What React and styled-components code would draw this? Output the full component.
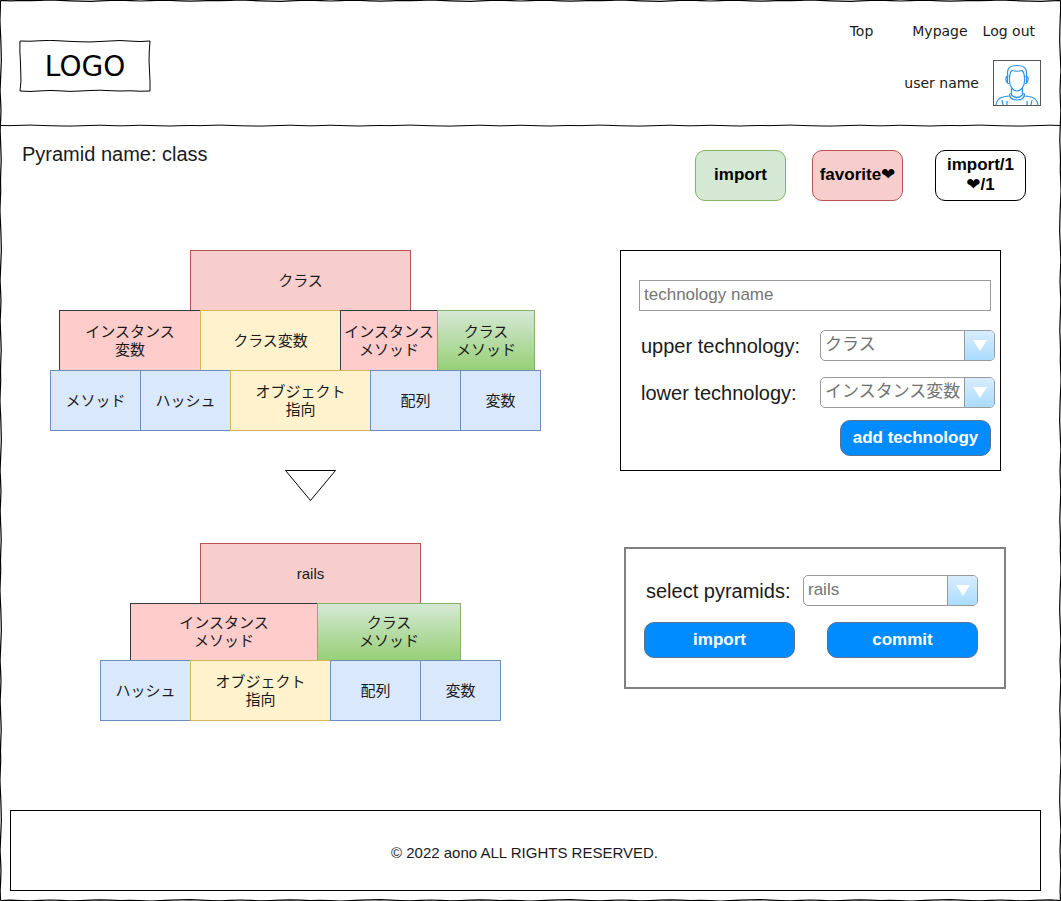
import React from "react";
import styled, { createGlobalStyle } from "styled-components";

const sans = `"Liberation Sans", "Noto Sans CJK JP", sans-serif`;
const wide = `"DejaVu Sans", "Noto Sans CJK JP", sans-serif`;

const GlobalStyle = createGlobalStyle`
  *, *::before, *::after { box-sizing: border-box; }
  body { margin: 0; background: #fff; color: #000; font-family: ${sans}; }
`;

/* Hand-drawn strokes: a straight run with a small wobble every 10 units. */
const wobble = [0, 0.6, 1, 0.4, 0, 0.3, -0.3, -0.8, -0.2, 0.5, 0.9, 1.2, 0.6, 0, -0.6, 0.1, 0.7, 0.2, -0.5];

function run(length, seed, amp, place) {
  const points = [];
  for (let t = 0; t <= length; t += 10) {
    const d = t === 0 || t >= length - 5 ? 0 : wobble[(t / 10 + seed) % wobble.length] * amp;
    points.push(place(t, d));
  }
  points.push(place(length, 0));
  return "M" + points.join("L");
}

function sketchBox(w, h, seed, amp, inset) {
  const r = w - inset;
  const b = h - inset;
  return [
    run(r - inset, seed, amp, (t, d) => `${inset + t} ${inset + d}`),
    run(b - inset, seed + 5, amp, (t, d) => `${r - d} ${inset + t}`),
    run(r - inset, seed + 9, amp, (t, d) => `${inset + t} ${b - d}`),
    run(b - inset, seed + 3, amp, (t, d) => `${inset + d} ${inset + t}`),
  ].join("");
}

const SketchOverlay = styled.svg`
  position: absolute;
  inset: 0;
  width: 100%;
  height: 100%;
  pointer-events: none;
  fill: none;
  stroke: #000;
  path { vector-effect: non-scaling-stroke; }
`;

const SketchRule = styled.svg`
  display: block;
  width: 100%;
  height: 4px;
  fill: none;
  stroke: #000;
  path { vector-effect: non-scaling-stroke; }
`;

const Page = styled.div`
  position: relative;
  display: flex;
  flex-direction: column;
  min-height: 100vh;
`;

const Header = styled.header`
  display: flex;
  justify-content: space-between;
  align-items: flex-start;
  padding: 22px 20px 17px 19px;
`;

const Logo = styled.a`
  position: relative;
  display: grid;
  place-items: center;
  width: 132px;
  height: 52px;
  margin-top: 18px;
  padding-top: 2px;
  color: #000;
  font: 28px/32px ${wide};
  text-decoration: none;
`;

const HeaderSide = styled.div`
  display: flex;
  flex-direction: column;
  align-items: flex-end;
  gap: 20px;
`;

const Nav = styled.nav`
  display: flex;
  gap: 15px;
  padding-right: 6px;
`;

const NavLink = styled.a`
  color: #1a1a1a;
  font: 14px/18px ${wide};
  text-decoration: none;
  &:first-child { margin-right: 24px; }
`;

const User = styled.div`
  display: flex;
  align-items: center;
  gap: 14px;
  color: #1a1a1a;
  font: 14px/18px ${wide};
`;

const Avatar = styled.svg`
  width: 48px;
  height: 46px;
  border: 1px solid #555;
  fill: none;
  stroke: #2b93ee;
  stroke-width: 1.2;
`;

const TitleBar = styled.section`
  display: flex;
  flex-wrap: wrap;
  justify-content: space-between;
  align-items: flex-start;
  padding: 15px 35px 0 22px;
`;

const Title = styled.h1`
  margin: 0;
  color: #1a1a1a;
  font: 20px/24px ${sans};
`;

const Actions = styled.div`
  display: flex;
  gap: 26px;
  padding-top: 8px;
`;

const tones = {
  green: ["#d5e8d4", "#82b366"],
  pink: ["#f8cecc", "#b85450"],
  white: ["#fff", "#000"],
  rose: ["#fcc", "#36393d"],
  yellow: ["#fff2cc", "#d6b656"],
  blue: ["#dae8fc", "#6c8ebf"],
  leaf: ["linear-gradient(#d5e8d4, #97d077)", "#82b366"],
};

const tone = ({ $tone }) => `
  background: ${tones[$tone][0]};
  border: 1px solid ${tones[$tone][1]};
`;

const Badge = styled.button`
  ${tone}
  width: 91px;
  height: 51px;
  padding: 0 0 2px;
  border-radius: 10px;
  color: #000;
  font: bold 17px/20px "Liberation Sans", "DejaVu Sans", sans-serif;
  white-space: nowrap;
`;

const Counter = styled(Badge).attrs({ as: "output" })`
  display: grid;
  place-content: center;
  margin-left: 6px;
  text-align: center;
`;

const Main = styled.main`
  display: grid;
  grid-template-columns: minmax(541px, 620fr) minmax(386px, 441fr);
  flex: 1;
  align-items: start;
  padding: 49px 0 80px;
`;

const Pyramids = styled.section`
  display: flex;
  flex-direction: column;
  align-items: flex-start;
  padding-left: 50px;
`;

const Pyramid = styled.div`
  margin-left: ${(p) => p.$indent}px;
`;

const Row = styled.div`
  display: grid;
  grid-template-columns: ${(p) => p.$columns.map((c) => `${c}px`).join(" ")};
  height: ${(p) => p.$height || 60}px;
  margin-left: ${(p) => p.$indent}px;
`;

const Block = styled.div`
  ${tone}
  display: grid;
  place-content: center;
  margin: 0 -1px -1px 0;
  color: #1a1a1a;
  font-size: 15px;
  line-height: 18px;
  text-align: center;
  white-space: pre;
`;

const Arrow = styled.svg`
  width: 52px;
  height: 32px;
  margin: 40px 0 41px 235px;
  fill: #fff;
  stroke: #000;
`;

const Panels = styled.section`
  display: flex;
  flex-direction: column;
  align-items: flex-start;
  gap: 76px;
`;

const AddPanel = styled.form`
  display: flex;
  flex-direction: column;
  width: 381px;
  padding: 29px 5px 14px 18px;
  border: 1px solid #000;
`;

const SelectPanel = styled.form`
  display: flex;
  flex-direction: column;
  gap: 16px;
  width: 382px;
  margin-left: 4px;
  padding: 26px 26px 29px 18px;
  border: 2px solid #808080;
`;

const TextInput = styled.input`
  height: 31px;
  margin: 0 4px 19px 0;
  padding: 0 4px 2px;
  border: 1px solid #999;
  border-radius: 0;
  color: #666;
  font: 17px/20px ${sans};
  &::placeholder { color: #757575; opacity: 1; }
`;

const Field = styled.div`
  display: flex;
  align-items: center;
  justify-content: space-between;
  padding-left: 2px;
  ${AddPanel} & + & { margin-top: 16px; }
`;

const Label = styled.label`
  color: #1a1a1a;
  font-size: 20px;
  line-height: 24px;
`;

const SelectBox = styled.div`
  display: flex;
  position: relative;
  width: 175px;
  height: 31px;
  border: 1px solid #999;
  border-radius: 5px;
  overflow: hidden;
`;

const Select = styled.select`
  flex: 1;
  appearance: none;
  padding: 0 30px 1px 4px;
  border: 0;
  background: transparent;
  color: #737373;
  font: 17px/24px ${sans};
`;

const DropMark = styled.span`
  position: absolute;
  inset: 0 0 0 auto;
  display: grid;
  place-items: center;
  width: 30px;
  border-left: 1px solid #999;
  background: linear-gradient(#d8edff, #aadcff);
  pointer-events: none;
  &::after {
    content: "";
    border: 7px solid transparent;
    border-top: 11px solid #fff;
    border-bottom: 0;
  }
`;

const Buttons = styled.div`
  display: flex;
  justify-content: space-between;
`;

const PrimaryButton = styled.button`
  width: 151px;
  height: 36px;
  padding: 0;
  border: 1px solid #5a7390;
  border-radius: 10px;
  background: #008cff;
  color: #fff;
  font: bold 17px/20px ${sans};
  ${AddPanel} & { align-self: flex-end; margin: 12px 4px 0 0; }
`;

const Footer = styled.footer`
  display: grid;
  place-items: center;
  height: 81px;
  margin: 0 20px 10px 10px;
  padding: 4px 2px 0 0;
  border: 1px solid #000;
  color: #1a1a1a;
  font-size: 15px;
  line-height: 18px;
`;

const PYRAMIDS = [
  {
    indent: 0,
    rows: [
      { indent: 140, columns: [220], blocks: [["pink", "クラス"]] },
      {
        indent: 9,
        columns: [141, 140, 97, 97],
        blocks: [
          ["rose", "インスタンス\n変数"],
          ["yellow", "クラス変数"],
          ["rose", "インスタンス\nメソッド"],
          ["leaf", "クラス\nメソッド"],
        ],
      },
      {
        indent: 0,
        columns: [90, 90, 140, 90, 80],
        blocks: [
          ["blue", "メソッド"],
          ["blue", "ハッシュ"],
          ["yellow", "オブジェクト\n指向"],
          ["blue", "配列"],
          ["blue", "変数"],
        ],
      },
    ],
  },
  {
    indent: 50,
    rows: [
      { indent: 100, columns: [220], blocks: [["pink", "rails"]] },
      {
        indent: 30,
        height: 57,
        columns: [187, 143],
        blocks: [["rose", "インスタンス\nメソッド"], ["leaf", "クラス\nメソッド"]],
      },
      {
        indent: 0,
        columns: [90, 140, 90, 80],
        blocks: [
          ["blue", "ハッシュ"],
          ["yellow", "オブジェクト\n指向"],
          ["blue", "配列"],
          ["blue", "変数"],
        ],
      },
    ],
  },
];

function PyramidView({ data }) {
  return (
    <Pyramid $indent={data.indent}>
      {data.rows.map((row, i) => (
        <Row key={i} $indent={row.indent} $columns={row.columns} $height={row.height}>
          {row.blocks.map(([t, text], j) => (
            <Block key={j} $tone={t}>{text}</Block>
          ))}
        </Row>
      ))}
    </Pyramid>
  );
}

function SelectField({ id, label, options }) {
  return (
    <Field>
      <Label htmlFor={id}>{label}</Label>
      <SelectBox>
        <Select id={id}>
          {options.map((o) => <option key={o}>{o}</option>)}
        </Select>
        <DropMark />
      </SelectBox>
    </Field>
  );
}

export default function App() {
  const stay = (e) => e.preventDefault();
  return (
    <>
      <GlobalStyle />
      <Page>
        <Header>
          <Logo href="#">
            <SketchOverlay viewBox="0 0 132 52" preserveAspectRatio="none" aria-hidden="true">
              <path d={sketchBox(132, 52, 4, 0.8, 1)} strokeWidth="1" />
            </SketchOverlay>
            LOGO
          </Logo>
          <HeaderSide>
            <Nav>
              <NavLink href="#">Top</NavLink>
              <NavLink href="#">Mypage</NavLink>
              <NavLink href="#">Log out</NavLink>
            </Nav>
            <User>
              user name
              <Avatar viewBox="0 0 46 44" role="img" aria-label="user">
                <path d="M14 16C12 7 16 4.500 23 4.500S34 7 32 16" />
                <path d="M15.500 18C15.500 13 16 11 18 9.500Q23 11 28 9.500C30 11 30.500 13 30.500 18V20C30.500 26 26.500 30 23 30S15.500 26 15.500 20Z" />
                <path d="M14 15.500Q11.500 15 12 19Q12.500 22.500 15 22.500M32 15.500Q34.500 15 34 19Q33.500 22.500 31 22.500M13.500 16V22M32.500 16V22" />
                <path d="M17.500 27V34Q23 39 28.500 34V27M15.500 33Q15.500 39 23 39T30.500 33L28.500 32.500M15.500 33L17.500 32.500" />
                <path d="M2 44C3 37 8 35.500 16 35M44 44C43 37 38 35.500 30 35M8 39L9 44M13 40V44M33 40V44M38 39L37 44" />
              </Avatar>
            </User>
          </HeaderSide>
        </Header>
        <SketchRule viewBox="0 0 1061 4" preserveAspectRatio="none" aria-hidden="true">
          <path d={run(1061, 4, 0.5, (t, d) => `${t} ${2.5 + d}`)} strokeWidth="1" />
        </SketchRule>
        <TitleBar>
          <Title>Pyramid name: class</Title>
          <Actions>
            <Badge type="button" $tone="green">import</Badge>
            <Badge type="button" $tone="pink">favorite❤</Badge>
            <Counter $tone="white">import/1<br />❤/1</Counter>
          </Actions>
        </TitleBar>
        <Main>
          <Pyramids>
            <PyramidView data={PYRAMIDS[0]} />
            <Arrow viewBox="0 0 52 32" aria-hidden="true">
              <path d="M.5 .5H50.5L25.5 30.5Z" />
            </Arrow>
            <PyramidView data={PYRAMIDS[1]} />
          </Pyramids>
          <Panels>
            <AddPanel onSubmit={stay}>
              <TextInput aria-label="technology name" placeholder="technology name" />
              <SelectField id="upper" label="upper technology:" options={["クラス"]} />
              <SelectField id="lower" label="lower technology:" options={["インスタンス変数"]} />
              <PrimaryButton>add technology</PrimaryButton>
            </AddPanel>
            <SelectPanel onSubmit={stay}>
              <SelectField id="pyramids" label="select pyramids:" options={["rails"]} />
              <Buttons>
                <PrimaryButton>import</PrimaryButton>
                <PrimaryButton>commit</PrimaryButton>
              </Buttons>
            </SelectPanel>
          </Panels>
        </Main>
        <Footer>© 2022 aono ALL RIGHTS RESERVED.</Footer>
        <SketchOverlay viewBox="0 0 1061 901" preserveAspectRatio="none" aria-hidden="true">
          <path d={sketchBox(1061, 901, 2, 0.7, 0.5)} strokeWidth="1.2" />
        </SketchOverlay>
      </Page>
    </>
  );
}
